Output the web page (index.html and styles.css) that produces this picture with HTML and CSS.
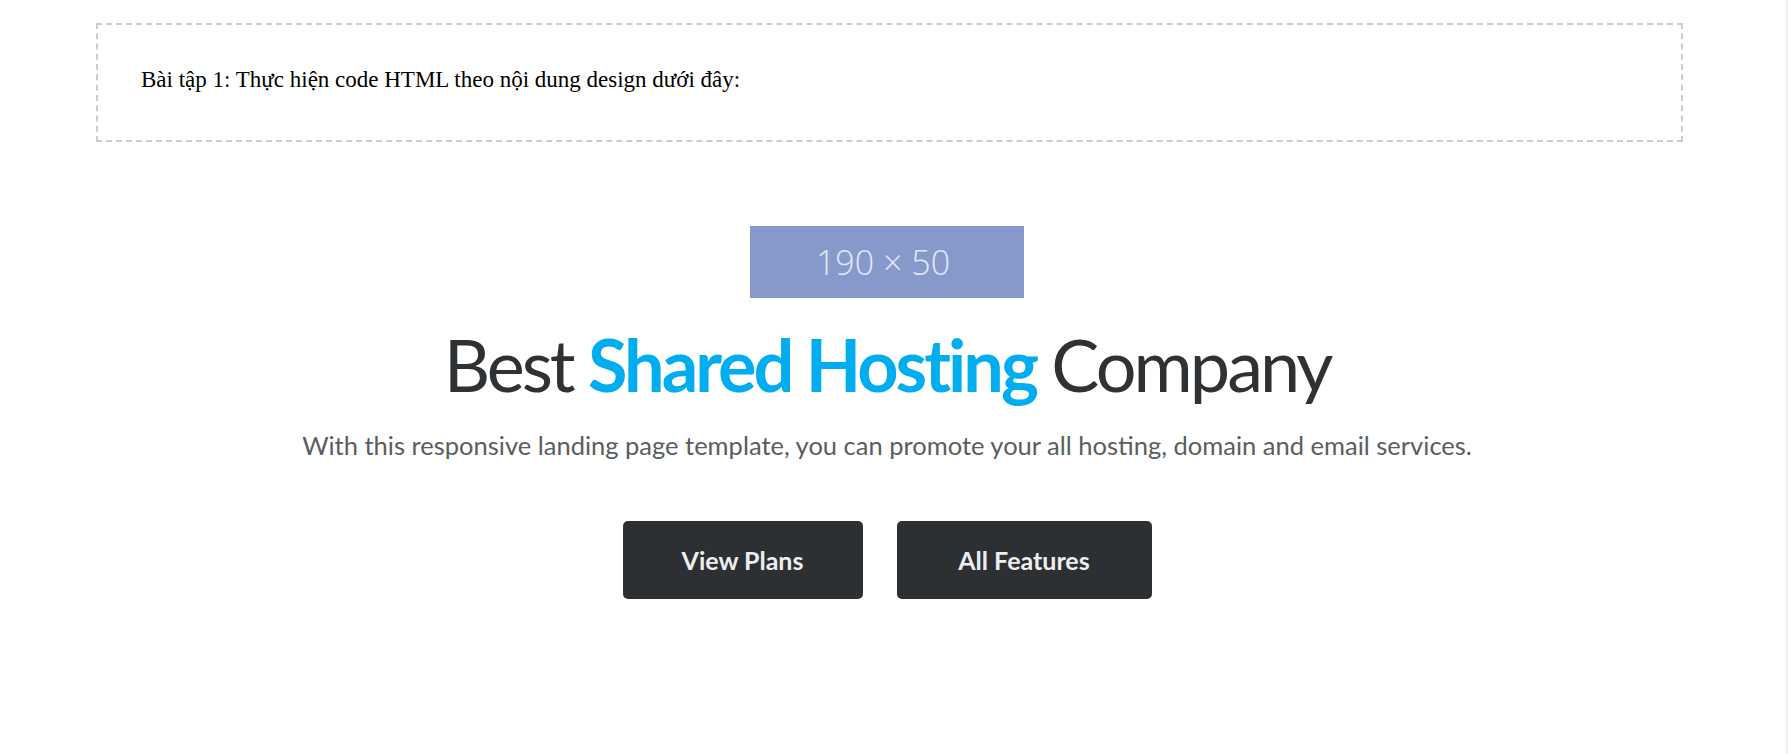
FILE: index.html
```html
<!DOCTYPE html>
<html lang="vi">
<head>
<meta charset="utf-8">
<title>Bài tập 1</title>
<link rel="stylesheet" href="styles.css">
</head>
<body>
<div class="page">
  <div class="task">
    <p class="task-text">Bài tập 1: Thực hiện code HTML theo nội dung design dưới đây:</p>
  </div>
  <section class="hero">
    <div class="logo">190 × 50</div>
    <h1 class="title">Best <strong class="accent">Shared Hosting</strong> Company</h1>
    <p class="lead">With this responsive landing page template, you can promote your all hosting, domain and email services.</p>
    <div class="actions">
      <a class="btn btn-plans" href="#">View Plans</a>
      <a class="btn btn-features" href="#">All Features</a>
    </div>
  </section>
</div>
</body>
</html>
```
FILE: styles.css
```css
html, body {
  margin: 0;
  padding: 0;
  background: #ffffff;
}
body {
  width: 1786px;
  min-height: 754px;
  border-right: 2px solid #f1f1f1;
}
.page {
  width: 1774px;
  padding-top: 23px;
}
.task {
  box-sizing: border-box;
  width: 1587px;
  height: 119px;
  margin-left: 96px;
  border: 2px dashed #cccccc;
  padding-left: 43px;
  padding-bottom: 5px;
  display: flex;
  align-items: center;
}
.task-text {
  margin: 0;
  font-family: "Liberation Serif", "Times New Roman", serif;
  font-size: 23px;
  color: #000;
}
.hero {
  display: flex;
  flex-direction: column;
  align-items: center;
  padding-top: 84px;
}
.logo {
  box-sizing: border-box;
  width: 274px;
  height: 72px;
  padding-right: 8px;
  background: #8799ca;
  color: #e3e8f5;
  font-family: "Open Sans", sans-serif;
  font-weight: 300;
  font-size: 34px;
  display: flex;
  align-items: center;
  justify-content: center;
}
.title {
  margin: 23px 0 0;
  font-family: Lato, "Noto Sans", sans-serif;
  font-weight: 400;
  font-size: 72px;
  line-height: 86px;
  color: #2f3235;
  letter-spacing: -3px;
}
.accent {
  color: #00aeef;
  font-weight: 700;
}
.lead {
  margin: 23px 0 0;
  font-family: Lato, "Noto Sans", sans-serif;
  font-size: 25.5px;
  color: #5a5d60;
}
.actions {
  display: flex;
  gap: 34px;
  margin-top: 61px;
}
.btn {
  display: flex;
  align-items: center;
  justify-content: center;
  height: 78px;
  border-radius: 5px;
  background: #2d3033;
  color: #eeeeee;
  font-family: Lato, "Noto Sans", sans-serif;
  font-size: 25px;
  font-weight: 700;
  text-decoration: none;
}
.btn-plans { width: 240px; }
.btn-features { width: 255px; }
```
